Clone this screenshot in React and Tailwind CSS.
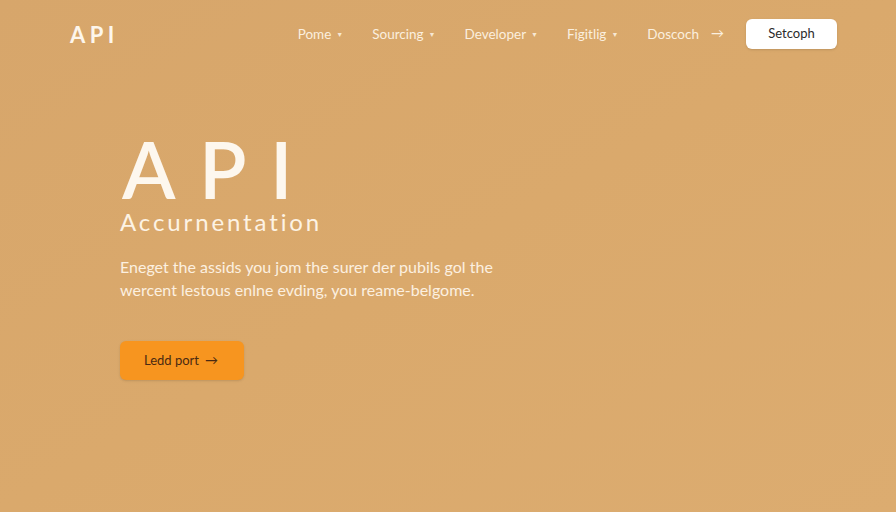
import React from "react";

const navItems = [
  { label: "Pome", caret: true },
  { label: "Sourcing", caret: true },
  { label: "Developer", caret: true },
  { label: "Figitlig", caret: true },
];

function Caret() {
  return <span className="ml-[5px] text-[7px] leading-none opacity-90">▼</span>;
}

export default function App() {
  return (
    <main
      className="w-[896px] h-[512px] overflow-hidden bg-gradient-to-br from-[#d7a66b] via-[#daa96c] to-[#dcac70] text-white"
      style={{ fontFamily: "Lato, 'Open Sans', sans-serif" }}
    >
      <header className="flex items-center h-[68px] pl-[70px] pr-[59px]">
        <div className="text-[22px] font-bold tracking-[0.2em] text-[#fdf6ec]">API</div>
        <nav className="ml-auto flex items-center text-[13.5px] text-[#fbefdf]">
          <div className="flex items-center gap-[29px]">
            {navItems.map((item) => (
              <span key={item.label} className="flex items-center">
                {item.label}
                {item.caret && <Caret />}
              </span>
            ))}
            <span className="flex items-center">
              Doscoch
              <span className="ml-[12px] text-[13px]">→</span>
            </span>
          </div>
          <button className="ml-[22px] w-[91px] h-[30px] rounded-md bg-white text-[13px] text-[#2b2b2b] shadow-sm">
            Setcoph
          </button>
        </nav>
      </header>

      <section className="pl-[120px] pt-[66px]">
        <h1 className="text-[78px] leading-[70px] font-semibold tracking-[0.3em] text-[#fdf7ee] pl-[2px]">
          API
        </h1>
        <h2 className="mt-[5px] text-[24px] leading-[26px] tracking-[0.12em] text-[#fdf3e4]">
          Accurnentation
        </h2>
        <p className="mt-[20px] w-[390px] text-[16px] leading-[23px] text-[#fcf0e0]">
          Eneget the assids you jom the surer der pubils gol the wercent lestous enlne evding, you reame-belgome.
        </p>
        <button className="mt-[40px] flex items-center w-[124px] h-[39px] pl-[24px] rounded-md bg-[#f7951f] text-[13px] text-[#4a2a12] shadow-sm">
          Ledd port <span className="ml-[6px]">→</span>
        </button>
      </section>
    </main>
  );
}
